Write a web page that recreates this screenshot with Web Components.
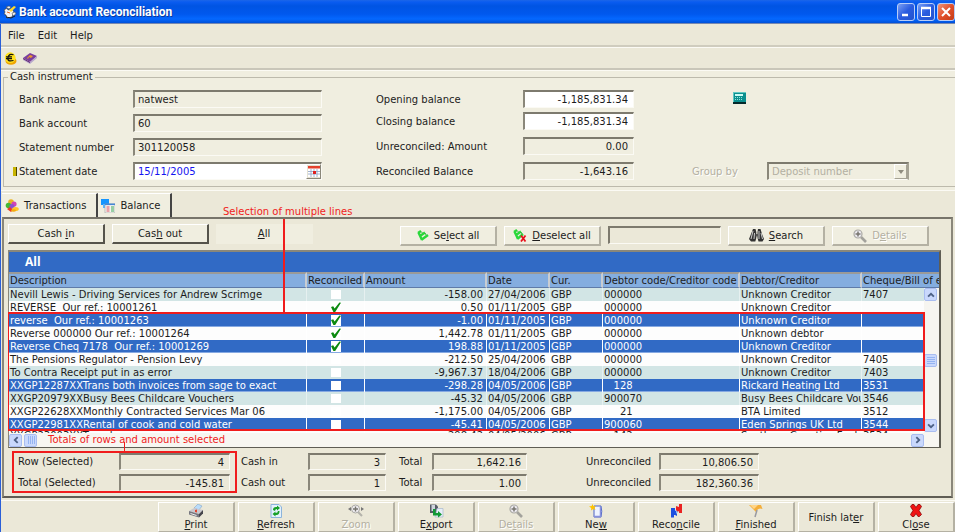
<!DOCTYPE html>
<html lang="en">
<head>
<meta charset="utf-8">
<title>Bank account Reconciliation</title>
<style>
html,body{margin:0;padding:0;background:#ebe8d8}
body{font:10px/13px "DejaVu Sans",Verdana,sans-serif;color:#1c1c1c;
--face:#f0eee0;--bar:#ebe8d8;--dark:#7d7a6e;--light:#fbfaf4;--blue:#316ac5;--red:#f01c1c;overflow:hidden}
</style>
</head>
<body>
<recon-window></recon-window>
<script>
const ICONS = {
app:`<svg viewBox="0 0 14 14" width="14" height="14"><path d="M1 5l3-2 1 2 4-1 2 3-2 5-5 1-1-3-2-1 1-2z" fill="#f4f4f4" stroke="#333" stroke-width=".6"/><path d="M3 2l3-1 2 1-2 2zM9 8l3-1 1 2-3 2z" fill="#eee" stroke="#444" stroke-width=".5"/><path d="M6 5l5-4 2 1-5 5z" fill="#ffd82a"/><path d="M3 12l5 1 4-2" stroke="#222" fill="none"/><path d="M4 7l3 1" stroke="#e8641c"/></svg>`,
euro:`<svg viewBox="0 0 13 13" width="13" height="13"><ellipse cx="7" cy="9" rx="5.5" ry="3.8" fill="#f0a400"/><circle cx="6.2" cy="5.7" r="5.4" fill="#ffe11c"/><path d="M9.500 2.800Q5 1 4 5.600T9.500 8.500M2 4.800h6M2 6.600h6" stroke="#111" stroke-width="1.200" fill="none"/></svg>`,
book:`<svg viewBox="0 0 14 13" width="14" height="13"><path d="M0 6l7-5 7 3-7 6z" fill="#7b3f9d"/><path d="M0 6l7 4 7-6v2l-7 6-7-4z" fill="#b8a9cc"/><path d="M0 6l7 4v1L0 7z" fill="#5a2070"/><path d="M4 6l3-3 3 1-2 2-2-1-1 2z" fill="#ef9a2a"/></svg>`,
calc:`<svg viewBox="0 0 13 12" width="13" height="12"><path d="M0 0h13v12H0z" fill="#0b8f8f"/><path d="M0 0h13v1H1v9H0z" fill="#5fc9c4"/><path d="M0 10h13v2H0z" fill="#04292b"/><path d="M2 2h8v2H2z" fill="#c9fbf4"/><path d="M2 5.5h8M2 7.5h8" stroke="#8fe5dc" stroke-dasharray="1 1"/></svg>`,
cal:`<svg viewBox="0 0 12 11" width="12" height="11"><path d="M0 0h12v11H0z" fill="#fff"/><path d="M0 0h12v2.5H0z" fill="#e4402c"/><path d="M0 5.5h12M0 8h12M3 3v8M6 3v8M9 3v8" stroke="#8aa0c4" stroke-width=".8"/><path d="M5 5h3v3H5z" fill="#e02020"/></svg>`,
trans:`<svg viewBox="0 0 14 13" width="14" height="13"><circle cx="6" cy="3" r="2.8" fill="#e8b424"/><circle cx="3.5" cy="6.5" r="2.8" fill="#44b832"/><circle cx="9" cy="5" r="2.6" fill="#d244b4"/><circle cx="7" cy="7.5" r="2.5" fill="#8a4fd0"/><path d="M2 10l3-2 3 3-2 2z" fill="#ee3a1e"/><ellipse cx="10.5" cy="10" rx="3.3" ry="2" fill="#ffc72a"/><ellipse cx="8.5" cy="11.5" rx="2.5" ry="1.3" fill="#f4aa10"/></svg>`,
bal:`<svg viewBox="0 0 14 14" width="14" height="14"><path d="M0 0h8v6H0z" fill="#1595ff"/><path d="M2 5h3v4H2z" fill="#58b5ff"/><path d="M4 5h10v9H4z" fill="#f5f5f0" stroke="#a0a0a0" stroke-width=".6"/><path d="M4 4.500h10v1.600H4z" fill="#4687d6"/><path d="M5.500 8h3M5.500 10h3M5.500 12h3" stroke="#e05060" stroke-width="1.200"/><path d="M10 8h3M10 10h3M10 12h3" stroke="#3aa858" stroke-width="1.200"/></svg>`,
sel:`<svg viewBox="0 0 12 12" width="12" height="12"><path d="M1.500 2.500L5 10M1 3l3-2M3 6l5-3.500M4.500 9.800L11 5" stroke="#2ad83a" stroke-width="2.400" fill="none"/><path d="M4 1.500L5.500 3M8 3l1 2" stroke="#1b9c2a" stroke-width=".8" fill="none"/></svg>`,
desel:`<svg viewBox="0 0 14 13" width="14" height="13"><path d="M1.500 2.500L5 10M1 3l3-2M3 6l5-3.500M4.500 9.800L10 5" stroke="#2ad83a" stroke-width="2.400" fill="none"/><path d="M4 1.500L5.500 3M8 3l1 2" stroke="#1b9c2a" stroke-width=".8" fill="none"/><path d="M8 6.500l4.500 6M12.500 6.500L8 12.500" stroke="#e8101c" stroke-width="1.800"/></svg>`,
bino:`<svg viewBox="0 0 15 13" width="15" height="13"><path d="M4 0h2.500l.8 3v6l-1 3.500H2L0 10l2-5zM9 0h2.500L13 5l2 5-1.500 2.500H9.500l-1-3.500V3z" fill="#333"/><path d="M4 2L2 10M10 2v8M12 4l1.500 6M5.500 4L5 10" stroke="#ddd" stroke-width=".9"/><path d="M6.500 5h2.500v2.500H6.500z" fill="#555"/></svg>`,
mag:`<svg viewBox="0 0 14 14" width="14" height="14"><path d="M8 8l5 5" stroke="#a3a29c" stroke-width="2.600"/><circle cx="5" cy="5" r="4" fill="#eceaf0" stroke="#aaa9a4" stroke-width="1.200"/><path d="M5 2.500v5M2.500 5h5" stroke="#77756e" stroke-width="1.500"/></svg>`,
zoom:`<svg viewBox="0 0 16 14" width="16" height="14"><path d="M0 5l3-2v4zM16 5l-3-2v4z" fill="#777"/><path d="M10 8l4 4" stroke="#b4b3ab" stroke-width="2.200"/><circle cx="7.500" cy="5" r="4" fill="#f0eef2" stroke="#aaa9a4"/><path d="M7.500 2.500v5M5 5h5" stroke="#77756e" stroke-width="1.400"/></svg>`,
print:`<svg viewBox="0 0 16 14" width="16" height="14"><path d="M6 4l4-4 4 2-3 4z" fill="#b9dcfa" stroke="#7b9cc0" stroke-width=".5"/><path d="M1 7l5-3 9 2-4 4z" fill="#c9c9cf"/><path d="M1 7l10 3v3.500L1 10.500z" fill="#77777f"/><path d="M11 10l4-4v3.500l-4 4z" fill="#45454c"/><path d="M2.500 9.500l6 2" stroke="#eee"/><path d="M7 6l2-.5v3L7 8z" fill="#e2452f"/></svg>`,
refresh:`<svg viewBox="0 0 12 14" width="12" height="14"><path d="M1 .5h8l2.500 2.500v10.500H1z" fill="#e4f1fc" stroke="#8cb4dc"/><path d="M3 6q0-3 3-3h1V1.500L10 4 7 6.500V5Q5 5 5 7zM9.500 7q0 4-3 4h-1v1.500L2.500 10l3-2.500V9Q8 9 8 7z" fill="#18a028"/></svg>`,
exp:`<svg viewBox="0 0 15 14" width="15" height="14"><path d="M1 .5h6l2 2V9H1z" fill="#565c66"/><path d="M2.500 1h3.500v6H2.500z" fill="#cfd4dc"/><path d="M8 4.500h6V13H6z" fill="#e6eef8" stroke="#a8b8cc" stroke-width=".7"/><path d="M4 5h2.500v4H9V7l4 3.500-4 3V11.500H4z" fill="#109a34"/></svg>`,
neu:`<svg viewBox="0 0 14 14" width="14" height="14"><path d="M5 2h7q1.500 5 0 11H5z" fill="#eef3ff" stroke="#4a62c4"/><path d="M11.500 3v9.500H5" stroke="#8890dc" stroke-width="1.500" fill="none"/><path d="M3.500 0l1 2.200L7 2 5.400 3.700 6.500 6 4.200 5 2 6.500l.3-2.600L0 2.500l2.600-.4z" fill="#ffc400"/></svg>`,
recon:`<svg viewBox="0 0 13 14" width="13" height="14"><path d="M1 4h4v3l2-1v6l-2-1H4v2.500H1z" fill="#1b4fe0"/><path d="M12 0H9v3L6 2v7l3-2v2h3z" fill="#ea2222"/><path d="M6 6l2 2-2 2z" fill="#7dc0ff"/></svg>`,
flag:`<svg viewBox="0 0 14 14" width="14" height="14"><path d="M0 1l12 0 1.500 4Q9 3 7 8L4 5z" fill="#f4ae3a"/><path d="M1 1l8 0-4 4z" fill="#ffd588"/><path d="M8 6L6 13" stroke="#9a9aa0" stroke-width="1.500"/></svg>`,
close:`<svg viewBox="0 0 12 14" width="12" height="14"><path d="M2 .5l2 0 2 3 2-3h2l1.500 2-2.500 4 2.500 4-2 2h-1.500L6 9.500l-2 3H2L.5 10.500 3 6.500.5 2.500z" fill="#f01414" stroke="#8a0808" stroke-width=".8"/></svg>`,
arrow:`<svg viewBox="0 0 12 12" width="10" height="10"><path d="M2.500 8L6 4.500 9.500 8" stroke="#4d6185" stroke-width="2.200" fill="none"/></svg>`,
grip:`<svg viewBox="0 0 8 8" width="8" height="8"><path d="M0 1.500h8M0 3.500h8M0 5.500h8M0 7.500h8" stroke="#8fb0f0" stroke-width=".9"/></svg>`
};
const text = k => String(k).replace(/&/g,'&amp;');
/* "Cash &in" marks the letter after & as the keyboard mnemonic */
const mnemonic = s => s.replace(/&(.)/, '<u>$1</u>');
function define(name, css, markup){
  customElements.define(name, class extends HTMLElement{
    connectedCallback(){
      if(this.shadowRoot) return;
      this.attachShadow({mode:'open'}).innerHTML =
        `<style>*{box-sizing:border-box}svg{display:block;flex:none}${css}</style>` + markup(this);
    }
  });
}

define('title-bar', `
:host{display:flex;box-sizing:border-box;align-items:center;height:24px;padding:0 0 0 3px;color:#fff;border-bottom:1px solid #7788b0;
background:linear-gradient(#1c66e8 0,#0a5cf0 2px,#0054e3 6px,#0058ee 14px,#0468ff 19px,#0050d8 23px)}
h1{flex:1;margin:0 0 0 2px;font:bold 12px/16px Roboto,"Noto Sans",sans-serif;text-shadow:1px 1px #0a3a9c}
nav{display:flex;gap:2px}
button{width:18px;height:18px;padding:0;border:1px solid #b8cdf8;border-radius:3px;background:linear-gradient(135deg,#7ba0f4,#2a5ce0 50%,#2453cc);display:grid;place-items:center}
button.x{background:linear-gradient(135deg,#f0957a,#e2502c 50%,#c43a14)}`,
()=>`${ICONS.app}<h1>Bank account Reconciliation</h1><nav>
<button aria-label="Minimize"><svg width="12" height="12"><path d="M2 9h6" stroke="#fff" stroke-width="2.500"/></svg></button>
<button aria-label="Maximize"><svg width="12" height="12"><path d="M1.500 2v8.500h9V2" stroke="#fff" fill="none"/><path d="M1 2h10" stroke="#fff" stroke-width="2.500"/></svg></button>
<button class="x" aria-label="Close window"><svg width="12" height="12"><path d="M2 2l8 8M10 2l-8 8" stroke="#fff" stroke-width="2"/></svg></button></nav>`);

define('menu-bar', `
:host{display:flex;box-sizing:border-box;gap:13px;align-items:center;height:23px;padding:1px 7px 0;background:var(--bar);border-bottom:2px solid #cfccbe}
button{border:0;background:none;padding:0;font:inherit;color:inherit}`,
()=>`<button>File</button><button>Edit</button><button>Help</button>`);

define('icon-bar', `
:host{display:flex;box-sizing:border-box;gap:6px;align-items:center;height:23px;padding:0 3px;background:var(--bar);border-top:1px solid var(--light);border-bottom:2px solid #c9c6b9}
button{border:0;background:none;padding:0;display:flex}`,
()=>`<button aria-label="Currency">${ICONS.euro}</button><button aria-label="Journal">${ICONS.book}</button>`);

/* label and text box; --label and --field set the two widths, --tall the height */
define('form-field', `
:host{display:flex;align-items:center;height:var(--tall,18px)}
i{width:6px;flex:none}
:host([required]) i::before{content:"";display:block;width:3px;height:9px;background:#c8b400;border-right:1px solid #4c4400}
label{width:var(--label);flex:none;white-space:nowrap}
span{display:flex;width:var(--field);height:100%;border:1px solid;border-width:2px 1px 1px 2px;border-color:var(--dark) var(--light) var(--light) #8a877a;background:transparent}
:host([editable]) span{background:#fff}
input{flex:1;min-width:0;width:0;border:0;padding:0 5px 0 3px;background:none;font:inherit;color:inherit;outline:0}
:host([num]) input{text-align:right}
:host([date]) input{color:#1414f0}
button{width:15px;padding:0;border:1px solid;border-color:#fff #8a877a #8a877a #fff;background:#e4e1d2;display:grid;place-items:center}`,
h=>`${h.hasAttribute('slotted')?'<i></i>':''}<label for="f">${text(h.getAttribute('label'))}</label><span><input id="f" value="${h.getAttribute('value')}" ${h.hasAttribute('editable')?'':'readonly'}>${h.hasAttribute('date')?`<button aria-label="Pick date">${ICONS.cal}</button>`:''}</span>`);

define('group-select', `
:host{display:flex;align-items:center;height:18px;color:#b3b0a2;text-shadow:1px 1px #fff}
label{width:75px}
span{display:flex;width:142px;height:100%;border:1px solid;border-width:2px 2px 1px 2px;border-color:var(--dark) #a5a294 var(--light) #8a877a}
select{appearance:none;flex:1;border:0;padding:0 3px;font:inherit;color:#b3b0a2;opacity:1;background:none}
b{width:13px;border:1px solid;border-color:#fff #a5a294 #a5a294 #fff;display:grid;place-items:center}
b::before{content:"";border:3px solid transparent;border-top:4px solid #8f8c7f;border-bottom:0}`,
()=>`<label for="s">Group by</label><span><select id="s" disabled><option>Deposit number</option></select><b></b></span>`);

define('cash-instrument', `
:host{display:block;padding:0 0 3px 2px;background:var(--face);border-top:1px solid var(--light)}
fieldset{margin:0;min-width:0;border:1px solid #bdbaac;border-right:0;padding:7px 0 6px 9px;display:grid;grid-template-columns:363fr 316fr 263fr}
legend{line-height:12px;padding:0 2px;margin-left:-5px}
.a{--label:114px;--field:189px;display:flex;flex-direction:column;gap:6px}
.b{--label:147px;--field:111px;display:flex;flex-direction:column;gap:7px}
.b div{display:flex;flex-direction:column;gap:4px}
.b div+div{gap:7px}
.c{display:flex;flex-direction:column;justify-content:space-between}
button{border:0;background:none;padding:2px 0 0;margin-left:41px;align-self:flex-start}`,
()=>`<fieldset><legend>Cash instrument</legend>
<div class="a"><form-field slotted label="Bank name" value="natwest"></form-field>
<form-field slotted label="Bank account" value="60"></form-field>
<form-field slotted label="Statement number" value="301120058"></form-field>
<form-field slotted required editable date label="Statement date" value="15/11/2005"></form-field></div>
<div class="b"><div><form-field num editable label="Opening balance" value="-1,185,831.34"></form-field>
<form-field num editable label="Closing balance" value="-1,185,831.34"></form-field></div>
<div><form-field num label="Unreconciled: Amount" value="0.00"></form-field>
<form-field num label="Reconciled Balance" value="-1,643.16"></form-field></div></div>
<div class="c"><button aria-label="Calculator">${ICONS.calc}</button><group-select></group-select></div></fieldset>`);

define('tab-strip', `
:host{display:flex;box-sizing:border-box;align-items:flex-end;height:27px;padding-left:1px;background:var(--bar);border-top:1px solid var(--light)}
button{display:flex;align-items:center;gap:5px;border:0;border-top:1px solid #fff;border-right:2px solid #444;background:var(--face);font:inherit;color:inherit;height:24px;padding:0 10px 0 3px}
button:first-child{height:26px;padding:0 10px 0 6px;gap:7px}`,
()=>`<button role="tab" aria-selected="true">${ICONS.trans}Transactions</button><button role="tab">${ICONS.bal}Balance</button>`);

define('push-button', `
:host{display:block;width:97px;height:20px}
button{width:100%;height:100%;display:flex;align-items:center;justify-content:center;gap:5px;padding:0;font:inherit;color:inherit;background:var(--face);border:1px solid;border-color:#fff #b4b1a3 #b4b1a3 #fff;border-width:1px 2px 2px 1px}
:host([heavy]) button{border-color:#fff #55534b #55534b #fff}
:host([flat]) button{border-color:transparent}
:host([tall]){width:77px;height:30px}
:host([tall]) button{flex-direction:column;gap:0;background:var(--bar);line-height:13px;border-bottom-width:1px}
:host([disabled]) button{color:#b3b0a2;text-shadow:1px 1px #fff}`,
h=>`<button ${h.hasAttribute('disabled')?'disabled':''}>${h.hasAttribute('icon')?ICONS[h.getAttribute('icon')]:''}<span>${mnemonic(h.getAttribute('text'))}</span></button>`);

define('action-row', `
:host{display:flex;box-sizing:border-box;align-items:flex-start;justify-content:space-between;padding-right:22px;height:26px}
div{display:flex;gap:7px}
div+div{padding-top:2px}
input{width:113px;height:18px;border:1px solid;border-width:2px 1px 1px 2px;border-color:var(--dark) var(--light) var(--light) var(--dark);background:none;font:inherit}`,
()=>`<div><push-button heavy text="Cash &in"></push-button><push-button heavy text="Cas&h out"></push-button><push-button flat text="&All"></push-button></div>
<div><push-button icon="sel" text="Se&lect all"></push-button><push-button icon="desel" text="&Deselect all"></push-button><input aria-label="Search text"><push-button icon="bino" text="&Search"></push-button><push-button disabled icon="mag" text="D&etails"></push-button></div>`);

/* description, box (1 ticked, 0 empty), amount, date, code, creditor, cheque, selected */
const ROWS = [
['Nevill Lewis - Driving Services for Andrew Scrimge',0,'-158.00','27/04/2006','000000','Unknown Creditor','7407',0],
['REVERSE  Our ref.: 10001261',1,'0.50','01/11/2005','000000','Unknown Creditor','',0],
['reverse  Our ref.: 10001263',1,'-1.00','01/11/2005','000000','Unknown Creditor','',1],
['Reverse 000000 Our ref.: 10001264',1,'1,442.78','01/11/2005','000000','Unknown debtor','',0],
['Reverse Cheq 7178  Our ref.: 10001269',1,'198.88','01/11/2005','000000','Unknown Creditor','',1],
['The Pensions Regulator - Pension Levy',0,'-212.50','25/04/2006','000000','Unknown Creditor','7405',0],
['To Contra Receipt put in as error',0,'-9,967.37','18/04/2006','000000','Unknown Creditor','7403',0],
['XXGP12287XXTrans both invoices from sage to exact',0,'-298.28','04/05/2006','   128','Rickard Heating Ltd','3531',1],
['XXGP20979XXBusy Bees Childcare Vouchers',0,'-45.32','04/05/2006','900070','Busy Bees Childcare Vou','3546',0],
['XXGP22628XXMonthly Contracted Services Mar 06',0,'-1,175.00','04/05/2006','     21','BTA Limited','3512',0],
['XXGP22981XXRental of cook and cold water',0,'-45.41','04/05/2006','900060','Eden Springs UK Ltd','3544',1],
['XXGP23003XXTravel',0,'-298.42','04/05/2006','   142','Southern Counties Fuel','3534',0]];
const TINT = [0,6,8];
const HEADS = ['Description','Reconciled','Amount','Date','Cur.','Debtor code/Creditor code','Debtor/Creditor','Cheque/Bill of e'];
const WIDTHS = [298,58,122,63,53,137,122];

define('transaction-grid', `
:host{display:block;position:relative;margin-right:10px;border:1px solid;border-width:2px 2px 1px 1px;border-color:#8a877a #5f5d54 #5f5d54 #8a877a;background:#fdfdfd}
h2{margin:0;height:20px;padding-left:16px;background:var(--blue);color:#fff;font:bold 12px/20px "Open Sans","Noto Sans",sans-serif}
.view{display:grid;grid-template-rows:100%;height:161px;overflow:hidden}
table,.v{grid-area:1/1}
table{width:100%;table-layout:fixed;border-collapse:separate;border-spacing:0;align-self:start}
th,td{padding:0 0 0 1px;text-align:left;font-weight:normal;white-space:pre;overflow:hidden;height:13px;line-height:13px;border-right:1px solid #fff}
th{height:16px;line-height:13px;background:#84addf;border-top:2px solid #9a9a98;border-right:2px solid #c9cdd2;border-bottom:1px solid #5f7ba8}
th:last-child,td:last-child{border-right:0}
td:nth-child(3){text-align:right;padding-right:3px}
td:nth-child(2){line-height:0}
tr.t td{background:#d2e5e5;border-color:#e6f0f0}
tr.s td{background:var(--blue);color:#fff;box-shadow:inset 0 -1px #86a9e2}
tr:last-child td{line-height:9px;vertical-align:top}
tr:last-child input{visibility:hidden}
input{appearance:none;display:block;margin:2px auto;width:10px;height:9px;background:#fff}
input:checked{height:11px;margin:1px auto}
input:checked::before{content:"";display:block;width:10px;height:10px;background:#0c8a10;clip-path:polygon(0 50%,22% 42%,36% 64%,84% 4%,100% 8%,42% 100%,24% 100%)}
.v{justify-self:end;width:15px;margin-top:16px;background:#f6f5f0;display:flex;flex-direction:column;justify-content:space-between;padding-bottom:1px}
button,.v b,.h b{display:grid;place-items:center;width:13px;height:13px;padding:0;border:1px solid #a9bdf0;border-radius:2px;background:#c9d8fc}
.down svg{transform:rotate(180deg)}
.h{display:flex;align-items:center;height:14px;padding-right:15px;background:#f7f6f1}
.h b{margin:0 auto 0 2px}
.h b svg,.h .l svg{transform:rotate(-90deg)}
.h .r svg{transform:rotate(90deg)}
.box{position:absolute;top:60px;left:-1px;right:14px;height:119px;border:2px solid var(--red);border-left-width:1px}
.line{position:absolute;top:-33px;left:274px;width:2px;height:94px;background:var(--red)}
.note{position:absolute;color:var(--red);white-space:nowrap}
.n1{top:-47px;left:214px}.n2{bottom:1px;left:39px}
.tick{position:absolute;left:115px;bottom:-5px;width:1px;height:10px;background:var(--red)}`,
()=>`<h2>All</h2><div class="view"><table><colgroup>${WIDTHS.map(w=>`<col style="width:${w}px">`).join('')}<col></colgroup>
<thead><tr>${HEADS.map(h=>`<th scope="col">${h}</th>`).join('')}</tr></thead><tbody>${
ROWS.map((r,i)=>`<tr class="${r[7]?'s':TINT.includes(i)?'t':''}"><td>${r[0]}</td><td><input type="checkbox" aria-label="Reconciled" ${r[1]?'checked':''}></td><td>${r[2]}</td><td>${r[3]}</td><td>GBP</td><td>${r[4]}</td><td>${r[5]}</td><td>${r[6]}</td></tr>`).join('')}</tbody></table>
<div class="v"><button aria-label="Scroll up">${ICONS.arrow}</button><b>${ICONS.grip}</b><button class="down" aria-label="Scroll down">${ICONS.arrow}</button></div></div>
<div class="h"><button class="l" aria-label="Scroll left">${ICONS.arrow}</button><b>${ICONS.grip}</b><button class="r" aria-label="Scroll right">${ICONS.arrow}</button></div>
<div class="box"></div><div class="line"></div><div class="note n1">Selection of multiple lines</div><div class="note n2">Totals of rows and amount selected</div><div class="tick"></div>`);

define('totals-panel', `
:host{display:flex;padding:3px 0 3px 4px;--tall:17px}
div{display:flex;flex-direction:column;gap:4px;border:2px solid transparent}
.a{--label:101px;--field:111px;border-color:var(--red);padding:0 5px 0 4px}
.b{--label:67px;--field:78px;margin-left:2px}
.c{--label:33px;--field:95px;margin-left:9px}
.d{--label:73px;--field:100px;margin-left:55px}`,
()=>[['a','Row (Selected)','4','Total (Selected)','-145.81'],['b','Cash in','3','Cash out','1'],['c','Total','1,642.16','Total','1.00'],['d','Unreconciled','10,806.50','Unreconciled','182,360.36']]
.map(([c,a,b,d,e])=>`<div class="${c}"><form-field num label="${a}" value="${b}"></form-field><form-field num label="${d}" value="${e}"></form-field></div>`).join(''));

define('tab-panel', `
:host{display:block;margin:0 2px 0 1px;padding:5px 0 0 4px;background:var(--bar);border:2px solid;border-color:#77746a #8a877a #5f5d54 #8a877a}`,
()=>`<slot></slot>`);

define('command-bar', `
:host{display:flex;justify-content:flex-end;gap:3px;padding-top:1px;margin-top:2px;background:var(--bar);border-top:1px solid var(--light)}`,
()=>[['print','&Print'],['refresh','&Refresh'],['zoom','Zoom',1],['exp','E&xport'],['mag','De&tails',1],['neu','Ne&w'],['recon','Reco&ncile'],['flag','&Finished'],['','Finish lat&er'],['close','Cl&ose']]
.map(([i,t,d])=>`<push-button tall ${i?`icon="${i}"`:''} ${d?'disabled':''} text="${t}"></push-button>`).join(''));

define('recon-window', `
:host{display:block}
main{border-left:1px solid #2a5fd8;background:var(--bar)}`,
()=>`<title-bar></title-bar><main><menu-bar></menu-bar><icon-bar></icon-bar><cash-instrument></cash-instrument><tab-strip></tab-strip>
<tab-panel><action-row></action-row><transaction-grid></transaction-grid><totals-panel></totals-panel></tab-panel><command-bar></command-bar></main>`);
</script>
</body>
</html>
